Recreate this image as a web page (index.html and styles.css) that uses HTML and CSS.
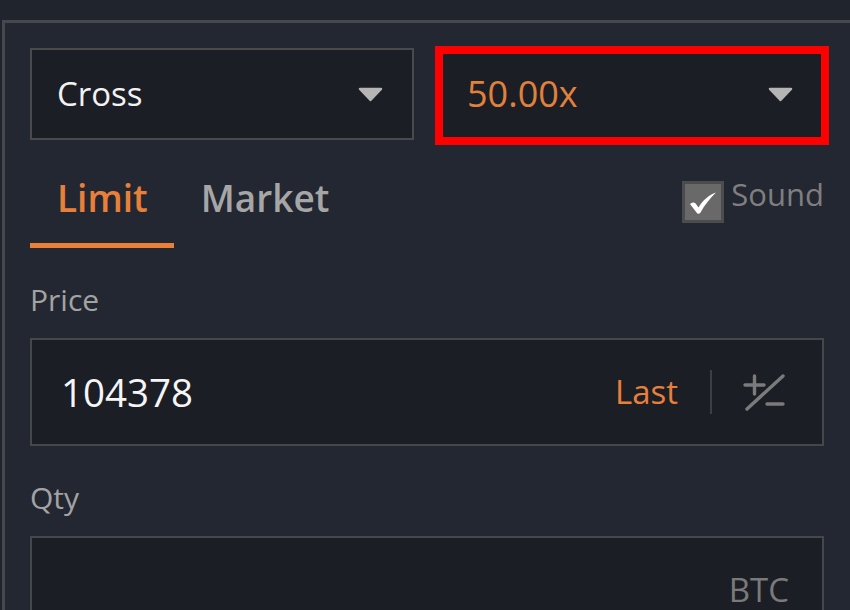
FILE: index.html
```html
<!DOCTYPE html>
<html lang="en">
<head>
<meta charset="utf-8">
<title>Order form</title>
<link rel="stylesheet" href="styles.css">
</head>
<body>
<div class="panel">
  <div class="selects">
    <div class="select">
      <span class="select-value">Cross</span>
      <svg class="caret" width="25" height="15" viewBox="0 0 25 15"><path d="M2 2 H23 L12.5 13 Z" fill="#b5b5b5" stroke="#b5b5b5" stroke-width="2.5" stroke-linejoin="round"/></svg>
    </div>
    <div class="select highlighted">
      <span class="select-value lev">50.00x</span>
      <svg class="caret" width="25" height="15" viewBox="0 0 25 15"><path d="M2 2 H23 L12.5 13 Z" fill="#b5b5b5" stroke="#b5b5b5" stroke-width="2.5" stroke-linejoin="round"/></svg>
    </div>
  </div>

  <div class="tabs">
    <div class="tab active">Limit</div>
    <div class="tab">Market</div>
    <div class="sound">
      <span class="checkbox">
        <svg width="36" height="36" viewBox="0 0 36 36"><path d="M5 20 C7 18 9.5 18 11 20 L13.5 23.5 C18 16 24 11 31 8.5 C25 14.5 19.5 21 15.5 28.5 C14.5 30.2 12.5 30.2 11.5 28.5 Z" fill="#ffffff"/></svg>
      </span>
      <span class="sound-text">Sound</span>
    </div>
  </div>

  <div class="field-label">Price</div>
  <div class="input">
    <span class="price-value">104378</span>
    <span class="last">Last</span>
    <span class="sep"></span>
    <svg class="pm" width="42" height="37" viewBox="0 0 42 37">
      <g stroke="#7b7b7b" stroke-width="3.4" stroke-linecap="round" fill="none">
        <path d="M2 11 H21"/>
        <path d="M11.5 2 V20"/>
        <path d="M40 2 L4 35"/>
        <path d="M24 30 H40"/>
      </g>
    </svg>
  </div>

  <div class="field-label">Qty</div>
  <div class="input">
    <span class="unit">BTC</span>
  </div>
</div>
</body>
</html>
```

FILE: styles.css
```css
html, body {
  margin: 0;
  padding: 0;
}

body {
  width: 850px;
  height: 610px;
  overflow: hidden;
  background: #20242c;
  font-family: "Open Sans", "Noto Sans", sans-serif;
}

.panel {
  margin: 20px 0 0 2px;
  border-top: 3px solid #46484c;
  border-left: 3px solid #46484c;
  background: #232731;
  padding: 25px 30px 0 25px;
  width: 794px;
  min-height: 620px;
}

.selects {
  display: flex;
  gap: 26px;
}

.select {
  position: relative;
  flex: 1;
  height: 92px;
  box-sizing: border-box;
  border: 2px solid #4a4a4c;
  background: #1c1e25;
  display: flex;
  align-items: center;
  justify-content: space-between;
  padding: 0 29px 0 25px;
}

.select.highlighted::after {
  content: "";
  position: absolute;
  left: -7px;
  right: -7px;
  top: -4px;
  bottom: -7px;
  border: 8px solid #ff0000;
}

.select-value {
  font-size: 33px;
  line-height: 40px;
  color: #f2f2f2;
}

.select-value.lev {
  font-size: 36px;
  color: #e0813c;
}

.caret {
  display: block;
}

.tabs {
  display: flex;
  margin-top: 33px;
}

.tab {
  font-size: 37px;
  font-weight: 600;
  line-height: 50px;
  padding: 0 27px 20px;
  border-bottom: 5px solid transparent;
  color: #a6a6a6;
}

.tab:first-child {
  padding-right: 26px;
}

.tab.active {
  color: #e8803a;
  border-bottom-color: #e8803a;
}

.sound {
  margin-left: auto;
  margin-top: 6px;
  display: flex;
  align-items: flex-start;
  gap: 7px;
}

.checkbox {
  margin-top: 2px;
  width: 42px;
  height: 42px;
  box-sizing: border-box;
  border: 3px solid #4c4c4c;
  background: #696969;
  display: block;
}

.checkbox svg {
  display: block;
}

.sound-text {
  font-size: 31px;
  line-height: 30px;
  color: #7f7f7f;
}

.field-label {
  margin-top: 31px;
  font-size: 30px;
  line-height: 41px;
  color: #a3a3a3;
}

.input {
  margin-top: 18px;
  height: 108px;
  box-sizing: border-box;
  border: 2px solid #46474a;
  background: #1c1e25;
  display: flex;
  align-items: center;
  padding: 0 37px 0 29px;
}

.price-value {
  flex: 1;
  font-size: 38.5px;
  line-height: 44px;
  color: #f5f5f5;
}

.last {
  font-size: 33px;
  line-height: 40px;
  color: #e8803a;
}

.sep {
  width: 2px;
  height: 44px;
  background: #3d3f44;
  margin: 0 31px 0 32px;
}

.pm {
  display: block;
}

.unit {
  margin-left: auto;
  margin-right: -4px;
  font-size: 33px;
  line-height: 40px;
  color: #7a7a7a;
}
```
